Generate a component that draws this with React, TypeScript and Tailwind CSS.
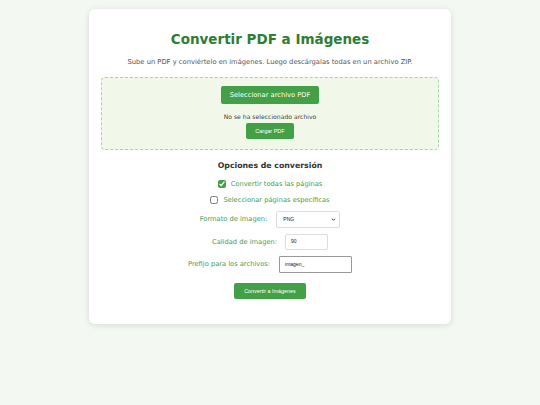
import React from 'react';

const App = () => {
  return (
    <div
      className="min-h-screen bg-[#f3f8f3] pt-[9px]"
      style={{ fontFamily: '"DejaVu Sans", Verdana, sans-serif' }}
    >
      <div className="mx-auto w-[362px] h-[315px] bg-white rounded-[6px] shadow-[0_1px_6px_rgba(0,0,0,0.12)] px-[12px] pt-[22px] flex flex-col items-center">
        {/* Title */}
        <h1 className="text-[13.5px] leading-[16px] font-bold text-[#2e7d32]">
          Convertir PDF a Imágenes
        </h1>
        <p className="mt-[11px] text-[6.75px] leading-[8px] text-[#555]">
          Sube un PDF y conviértelo en imágenes. Luego descárgalas todas en un archivo ZIP.
        </p>

        {/* Upload zone */}
        <div className="mt-[11px] w-full border border-dashed border-[#a5d6a7] bg-[#f1f8e9] rounded-[4px] pt-[8px] pb-[10px] flex flex-col items-center">
          <button className="h-[18px] w-[98px] bg-[#43a047] text-white text-[6.7px] rounded-[2px]">
            Seleccionar archivo PDF
          </button>
          <span className="mt-[9px] text-[6.1px] leading-[8px] text-[#444]">
            No se ha seleccionado archivo
          </span>
          <button
            className="mt-[2px] h-[16px] w-[48px] bg-[#43a047] text-white text-[5.5px] rounded-[2px]"
            style={{ fontFamily: '"Liberation Sans", Arial, sans-serif' }}
          >
            Cargar PDF
          </button>
        </div>

        {/* Options */}
        <h2 className="mt-[11px] text-[7.8px] leading-[10px] font-bold text-[#333]">
          Opciones de conversión
        </h2>

        <label className="mt-[9px] flex items-center gap-[5px] text-[6.7px] leading-[8px] text-[#43a047]">
          <input type="checkbox" defaultChecked className="m-0 w-[8px] h-[8px] accent-[#43a047]" />
          Convertir todas las páginas
        </label>
        <label className="mt-[8px] flex items-center gap-[5px] text-[6.7px] leading-[8px] text-[#43a047]">
          <input type="checkbox" className="m-0 w-[8px] h-[8px] accent-[#43a047]" />
          Seleccionar páginas específicas
        </label>

        <div className="mt-[7px] flex items-center gap-[9px] text-[6.7px] text-[#4a9a4f]">
          <span>Formato de imagen:</span>
          <div
            className="relative h-[17px] w-[64px] border border-[#ddd] rounded-[2px] flex items-center pl-[6px] text-[5px] text-[#222]"
            style={{ fontFamily: '"Liberation Sans", Arial, sans-serif' }}
          >
            PNG
            <svg className="absolute right-[3px] w-[5px] h-[5px]" viewBox="0 0 10 10">
              <path d="M2 3.5 L5 6.5 L8 3.5" fill="none" stroke="#222" strokeWidth="1.8" />
            </svg>
          </div>
        </div>

        <div className="mt-[6px] flex items-center gap-[8px] text-[6.7px] text-[#4a9a4f]">
          <span>Calidad de imagen:</span>
          <div
            className="h-[16px] w-[43px] border border-[#ddd] rounded-[2px] flex items-center pl-[5px] text-[5px] text-[#222]"
            style={{ fontFamily: '"Liberation Sans", Arial, sans-serif' }}
          >
            90
          </div>
        </div>

        <div className="mt-[6px] flex items-center gap-[9px] text-[6.7px] text-[#4a9a4f]">
          <span>Prefijo para los archivos:</span>
          <div
            className="h-[17px] w-[73px] border border-[#999] rounded-[1px] flex items-center pl-[5px] text-[5px] text-[#222]"
            style={{ fontFamily: '"Liberation Sans", Arial, sans-serif' }}
          >
            imagen_
          </div>
        </div>

        <button
          className="mt-[10px] h-[16px] w-[72px] bg-[#43a047] text-white text-[5.4px] rounded-[2px]"
          style={{ fontFamily: '"Liberation Sans", Arial, sans-serif' }}
        >
          Convertir a Imágenes
        </button>
      </div>
    </div>
  );
};

export default App;
